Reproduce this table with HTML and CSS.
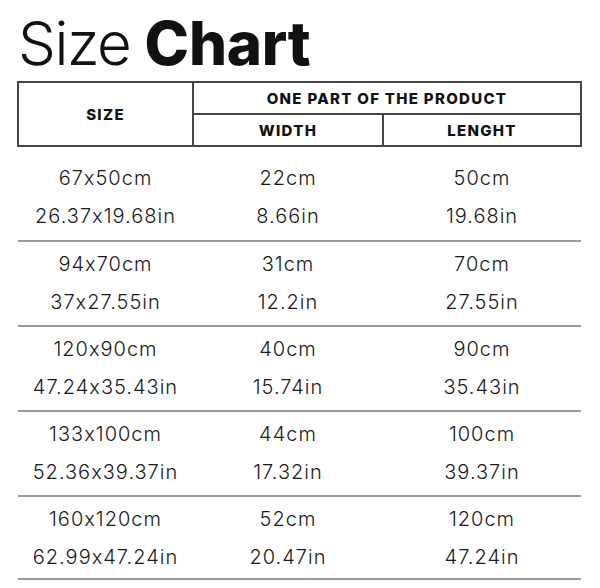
FILE: index.html
```html
<!DOCTYPE html>
<html lang="en">
<head>
<meta charset="utf-8">
<title>Size Chart</title>
<link rel="stylesheet" href="styles.css">
</head>
<body>
<main class="page">
  <h1 class="title"><span class="title-light">Size</span> <span class="title-bold">Chart</span></h1>
  <table class="chart">
    <colgroup>
      <col class="col-size">
      <col class="col-width">
      <col class="col-length">
    </colgroup>
    <thead>
      <tr>
        <th rowspan="2" class="head-cell">SIZE</th>
        <th colspan="2" class="head-cell">ONE PART OF THE PRODUCT</th>
      </tr>
      <tr>
        <th class="head-cell">WIDTH</th>
        <th class="head-cell">LENGHT</th>
      </tr>
    </thead>
    <tbody>
      <tr class="row first">
        <td>67x50cm<br>26.37x19.68in</td>
        <td>22cm<br>8.66in</td>
        <td>50cm<br>19.68in</td>
      </tr>
      <tr class="row">
        <td>94x70cm<br>37x27.55in</td>
        <td>31cm<br>12.2in</td>
        <td>70cm<br>27.55in</td>
      </tr>
      <tr class="row">
        <td>120x90cm<br>47.24x35.43in</td>
        <td>40cm<br>15.74in</td>
        <td>90cm<br>35.43in</td>
      </tr>
      <tr class="row">
        <td>133x100cm<br>52.36x39.37in</td>
        <td>44cm<br>17.32in</td>
        <td>100cm<br>39.37in</td>
      </tr>
      <tr class="row">
        <td>160x120cm<br>62.99x47.24in</td>
        <td>52cm<br>20.47in</td>
        <td>120cm<br>47.24in</td>
      </tr>
    </tbody>
  </table>
</main>
</body>
</html>
```
FILE: styles.css
```css
* { box-sizing: border-box; }

html, body {
  margin: 0;
  padding: 0;
  background: #ffffff;
}

body {
  font-family: "Inter", "Liberation Sans", sans-serif;
  font-feature-settings: "calt" 0;
  color: #1a1a1a;
}

.page {
  width: 600px;
  height: 588px;
  padding: 0 20px 0 17px;
  overflow: hidden;
}

.title {
  margin: 0;
  padding: 11px 0 0 1px;
  height: 81px;
  font-size: 60px;
  line-height: 64px;
  color: #111;
}

.title-light {
  font-weight: 300;
  letter-spacing: -1.5px;
}

.title-bold {
  font-weight: 800;
  letter-spacing: -0.3px;
}

.chart {
  width: 563px;
  border-collapse: collapse;
  table-layout: fixed;
}

.col-size { width: 175px; }
.col-width { width: 190px; }
.col-length { width: 198px; }

.head-cell {
  border: 2px solid #444;
  height: 32px;
  padding: 0;
  font-size: 15px;
  font-weight: 800;
  color: #111;
  text-align: center;
  vertical-align: middle;
  letter-spacing: 1.3px;
}

.row td {
  padding: 3px 0 4px;
  line-height: 38px;
  font-size: 20px;
  font-weight: 350;
  letter-spacing: 1px;
  text-align: center;
  vertical-align: top;
  border-bottom: 2px solid #9a9a9a;
  color: #1a1a1a;
}

.row.first td {
  padding-top: 12px;
  padding-bottom: 5px;
}

.row:last-child td {
  padding-bottom: 2px;
}
```
